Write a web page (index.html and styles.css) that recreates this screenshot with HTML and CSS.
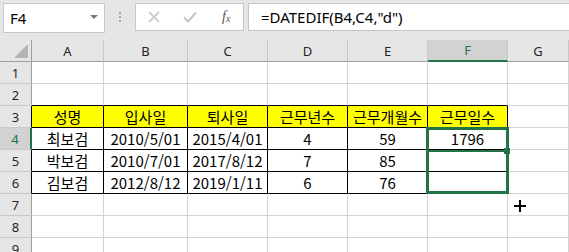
FILE: index.html
```html
<!DOCTYPE html>
<html lang="ko">
<head>
  <meta charset="UTF-8" />
  <title>근무일수 계산</title>
  <link rel="stylesheet" href="styles.css">
</head>
<body>
  <div class="toolbar">
    <div class="name-box">
      <span>F4</span>
      <span class="drop"></span>
    </div>
    <div class="grip"><i></i><i></i><i></i></div>
    <div class="buttons">
      <svg class="btn-x" width="12" height="12" viewBox="0 0 12 12"><path d="M1 1 L11 11 M11 1 L1 11" stroke="#c4c4c4" stroke-width="1.6" fill="none"/></svg>
      <svg class="btn-ok" width="14" height="12" viewBox="0 0 14 12"><path d="M1 6.5 L5 10.5 L13 1.5" stroke="#c4c4c4" stroke-width="2" fill="none"/></svg>
      <span class="fx">f<sub>x</sub></span>
    </div>
    <div class="formula">=DATEDIF(B4,C4,"d")</div>
  </div>

  <div class="sheet">
    <div class="grid">
      <div class="corner"><span class="tri"></span></div>
      <div class="hd">A</div><div class="hd">B</div><div class="hd">C</div><div class="hd">D</div><div class="hd">E</div><div class="hd hd-sel">F</div><div class="hd">G</div>

      <div class="rh">1</div>
      <div class="c"></div><div class="c"></div><div class="c"></div><div class="c"></div><div class="c"></div><div class="c"></div><div class="c"></div>

      <div class="rh">2</div>
      <div class="c above"></div><div class="c above"></div><div class="c above"></div><div class="c above"></div><div class="c above"></div><div class="c above"></div><div class="c"></div>

      <div class="rh rh-tb">3</div>
      <div class="c tb yellow">성명</div><div class="c tb yellow">입사일</div><div class="c tb yellow">퇴사일</div><div class="c tb yellow">근무년수</div><div class="c tb yellow">근무개월수</div><div class="c tb yellow">근무일수</div><div class="c"></div>

      <div class="rh rh-sel">4</div>
      <div class="c tb">최보검</div><div class="c tb">2010/5/01</div><div class="c tb">2015/4/01</div><div class="c tb">4</div><div class="c tb">59</div><div class="c tb">1796</div><div class="c"></div>

      <div class="rh rh-tb">5</div>
      <div class="c tb">박보검</div><div class="c tb">2010/7/01</div><div class="c tb">2017/8/12</div><div class="c tb">7</div><div class="c tb">85</div><div class="c tb"></div><div class="c"></div>

      <div class="rh rh-tb">6</div>
      <div class="c tb">김보검</div><div class="c tb">2012/8/12</div><div class="c tb">2019/1/11</div><div class="c tb">6</div><div class="c tb">76</div><div class="c tb"></div><div class="c"></div>

      <div class="rh">7</div>
      <div class="c"></div><div class="c"></div><div class="c"></div><div class="c"></div><div class="c"></div><div class="c"></div><div class="c"></div>

      <div class="rh">8</div>
      <div class="c"></div><div class="c"></div><div class="c"></div><div class="c"></div><div class="c"></div><div class="c"></div><div class="c"></div>

      <div class="rh">9</div>
      <div class="c"></div><div class="c"></div><div class="c"></div><div class="c"></div><div class="c"></div><div class="c"></div><div class="c"></div>
    </div>

    <!-- selection F4:F6 -->
    <div class="selection"><span class="active-line"></span></div>
    <span class="handle"></span>
    <svg class="cursor" width="14" height="14" viewBox="0 0 14 14"><path d="M7 1 V13 M1 7 H13" stroke="#000" stroke-width="2" fill="none"/></svg>
  </div>
</body>
</html>
```

FILE: styles.css
```css
body {
  margin: 0;
  background: #e6e6e6;
  font-family: "Noto Sans CJK KR", "Noto Sans", sans-serif;
  color: #000;
  overflow: hidden;
  width: 569px;
  height: 252px;
}

/* formula bar */
.toolbar {
  height: 40px;
  display: flex;
  align-items: flex-start;
  padding-top: 3px;
  box-sizing: border-box;
}

.name-box {
  margin-left: 3px;
  width: 102px;
  height: 30px;
  background: #fff;
  border: 1px solid #c6c6c6;
  box-sizing: border-box;
  display: flex;
  align-items: center;
  justify-content: space-between;
  padding: 0 6px 0 6px;
  font-family: "Noto Sans", sans-serif;
  font-size: 15px;
  color: #000;
}

.drop {
  width: 0;
  height: 0;
  border-left: 4px solid transparent;
  border-right: 4px solid transparent;
  border-top: 4px solid #7a7a7a;
  margin-top: -3px;
}

.grip {
  width: 30px;
  display: flex;
  flex-direction: column;
  align-items: center;
  gap: 2px;
  padding-top: 9px;
}

.grip i {
  width: 2px;
  height: 2px;
  background: #a6a6a6;
}

.buttons {
  width: 109px;
  height: 28px;
  background: #fff;
  border: 1px solid #c6c6c6;
  box-sizing: border-box;
  display: flex;
  align-items: center;
  position: relative;
}

.btn-x {
  margin-left: 12px;
}

.btn-ok {
  margin-left: 23px;
}

.fx {
  margin-left: 25px;
  font-family: "Liberation Serif", serif;
  font-style: italic;
  font-size: 14px;
  color: #555;
}

.fx sub {
  font-size: 10px;
  vertical-align: -1px;
}

.formula {
  margin-left: 4px;
  flex: 1;
  height: 28px;
  background: #fff;
  border: 1px solid #c6c6c6;
  border-right: none;
  box-sizing: border-box;
  padding-left: 12px;
  font-family: "Noto Sans", sans-serif;
  font-size: 15px;
  line-height: 26px;
  color: #000;
  white-space: nowrap;
}

/* sheet */
.sheet {
  position: relative;
  background: #fff;
}

.grid {
  display: grid;
  grid-template-columns: 32px 72px 84px 80px 80px 80px 80px 1fr;
  grid-auto-rows: 22px;
}

.grid > div {
  box-sizing: border-box;
  border-right: 1px solid #d4d4d4;
  border-bottom: 1px solid #d4d4d4;
  display: flex;
  align-items: center;
  justify-content: center;
  white-space: nowrap;
}

.corner {
  background: #e6e6e6;
  position: relative;
}

.grid > .corner {
  border-right: 1px solid #9e9e9e;
  border-bottom: 1px solid #9e9e9e;
}

.tri {
  position: absolute;
  right: 3px;
  bottom: 3px;
  width: 0;
  height: 0;
  border-left: 14px solid transparent;
  border-bottom: 14px solid #b4b4b4;
}

.grid > .hd {
  background: #e6e6e6;
  border-right: 1px solid #c8c8c8;
  border-bottom: 1px solid #9e9e9e;
  font-family: "Noto Sans", sans-serif;
  font-size: 13px;
  color: #262626;
}

.grid > .hd-sel {
  background: #d2d2d2;
  color: #217346;
  border-bottom: 2px solid #217346;
}

.grid > .rh {
  background: #e6e6e6;
  border-right: 1px solid #9e9e9e;
  border-bottom: 1px solid #c8c8c8;
  font-family: "Noto Sans", sans-serif;
  font-size: 13px;
  color: #262626;
}

.grid > .rh-tb {
  border-right-color: #000;
}

.grid > .rh-sel {
  background: #d2d2d2;
  color: #217346;
  border-right: 2px solid #217346;
}

.c {
  font-size: 15px;
}

.grid > .above {
  border-bottom-color: #000;
}

.grid > .tb {
  border-right-color: #000;
  border-bottom-color: #000;
}

.yellow {
  background: #ffff00;
}

.selection {
  position: absolute;
  left: 426px;
  top: 87px;
  width: 83px;
  height: 67px;
  border: 3px solid #217346;
  box-sizing: border-box;
}

.active-line {
  position: absolute;
  left: 0;
  right: 0;
  top: 20px;
  height: 2px;
  background: #217346;
}

.handle {
  position: absolute;
  left: 504px;
  top: 108px;
  width: 6px;
  height: 6px;
  background: #217346;
}

.cursor {
  position: absolute;
  left: 513px;
  top: 159px;
}
```
